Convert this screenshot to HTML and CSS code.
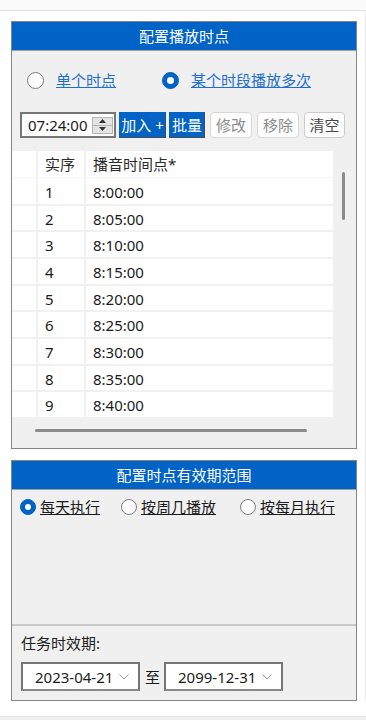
FILE: index.html
```html
<!DOCTYPE html>
<html>
	<head>
		<meta charset="utf-8">
		<title>配置播放时点</title>
		<meta name="viewport" content="width=device-width, user-scalable=no">
		<link rel="stylesheet" href="styles.css">
	</head>
	<body>
		<div class="top_strip"></div>
		<div class="page">

			<div class="cfg_box">
				<div class="box_title">配置播放时点</div>
				<div class="mode_row">
					<span class="opt"><span class="radio"></span><a class="link_blue">单个时点</a></span>
					<span class="opt opt_wide"><span class="radio on"></span><a class="link_blue">某个时段播放多次</a></span>
				</div>
				<div class="tool_row">
					<div class="time_box">
						<span class="time_val">07:24:00</span>
						<span class="spin">
							<span class="spin_half"><svg width="7" height="4" viewBox="0 0 7 4"><polygon points="0,4 3.5,0 7,4" fill="#333"/></svg></span>
							<span class="spin_half"><svg width="7" height="4" viewBox="0 0 7 4"><polygon points="0,0 3.5,4 7,0" fill="#333"/></svg></span>
						</span>
					</div>
					<button type="button" class="btn_blue w47">加入 +</button>
					<button type="button" class="btn_blue w36">批量</button>
					<button type="button" class="btn_light" disabled>修改</button>
					<button type="button" class="btn_light" disabled>移除</button>
					<button type="button" class="btn_light btn_on">清空</button>
				</div>
				<div class="list_area">
					<div class="grid_view">
						<div class="g_row g_head"><span></span><span>实序</span><span>播音时间点*</span></div>
						<div class="g_row"><span></span><span>1</span><span>8:00:00</span></div>
						<div class="g_row"><span></span><span>2</span><span>8:05:00</span></div>
						<div class="g_row"><span></span><span>3</span><span>8:10:00</span></div>
						<div class="g_row"><span></span><span>4</span><span>8:15:00</span></div>
						<div class="g_row"><span></span><span>5</span><span>8:20:00</span></div>
						<div class="g_row"><span></span><span>6</span><span>8:25:00</span></div>
						<div class="g_row"><span></span><span>7</span><span>8:30:00</span></div>
						<div class="g_row"><span></span><span>8</span><span>8:35:00</span></div>
						<div class="g_row"><span></span><span>9</span><span>8:40:00</span></div>
						<div class="g_row"><span></span><span></span><span></span></div>
					</div>
					<div class="v_track"><div class="v_thumb"></div></div>
					<div class="h_track"><div class="h_thumb"></div></div>
				</div>
			</div>

			<div class="cfg_box box_two">
				<div class="box_title">配置时点有效期范围</div>
				<div class="range_row">
					<span class="opt"><span class="radio small on"></span><a class="link_dark">每天执行</a></span>
					<span class="opt opt_r2"><span class="radio small"></span><a class="link_dark">按周几播放</a></span>
					<span class="opt opt_r3"><span class="radio small"></span><a class="link_dark">按每月执行</a></span>
				</div>
				<div class="range_blank"></div>
				<div class="valid_part">
					<div class="valid_label">任务时效期:</div>
					<div class="date_row">
						<div class="date_box">2023-04-21<svg class="chev" width="10" height="6" viewBox="0 0 10 6"><polyline points="0.5,0.5 5,5 9.5,0.5" fill="none" stroke="#9a9a9a" stroke-width="1"/></svg></div>
						<span class="to">至</span>
						<div class="date_box">2099-12-31<svg class="chev" width="10" height="6" viewBox="0 0 10 6"><polyline points="0.5,0.5 5,5 9.5,0.5" fill="none" stroke="#9a9a9a" stroke-width="1"/></svg></div>
					</div>
				</div>
			</div>

		</div>
		<div class="bottom_strip"></div>
	</body>
</html>
```

FILE: styles.css
```css
body {
	margin: 0;
	background: #fff;
	font-family: "Noto Sans", "Noto Sans CJK SC", sans-serif;
	font-size: 15px;
	color: #1b1b1b;
}
.top_strip {
	height: 10px;
	background: #fafafa;
	border-bottom: 1px solid #e2e2e2;
}
.page {
	padding: 10px 8px 0 11px;
	border-right: 1px solid #ededed;
}
.cfg_box {
	border: 1px solid #848484;
	background: #f0f0f0;
}
.box_two {
	margin-top: 11px;
}
.box_title {
	height: 28px;
	line-height: 28px;
	background: #0063c5;
	color: #fff;
	text-align: center;
	border-bottom: 1px solid #a0a0a0;
}

/* radio options */
.mode_row {
	height: 58px;
	display: flex;
	align-items: center;
	padding-left: 15px;
}
.opt {
	display: flex;
	align-items: center;
	line-height: 20px;
}
.opt_wide {
	margin-left: 46px;
}
.radio {
	width: 17px;
	height: 17px;
	box-sizing: border-box;
	border: 1px solid #7d7d7d;
	border-radius: 50%;
	background: #fbfbfb;
	margin-right: 12px;
	display: flex;
	align-items: center;
	justify-content: center;
}
.radio.on {
	background: #0063c5;
	border-color: #0063c5;
}
.radio.on::after {
	content: "";
	width: 7px;
	height: 7px;
	border-radius: 50%;
	background: #fff;
}
.radio.small {
	width: 16px;
	height: 16px;
	margin-right: 4px;
}
.radio.small.on::after {
	width: 6px;
	height: 6px;
}
.link_blue {
	color: #1f6fd3;
	text-decoration: underline;
}
.link_dark {
	color: #1b1b1b;
	text-decoration: underline;
}

/* toolbar */
.tool_row {
	display: flex;
	align-items: center;
	gap: 3px;
	height: 26px;
	margin: 3px 0 0 8px;
}
.time_box {
	width: 96px;
	height: 26px;
	box-sizing: border-box;
	border: 2px solid #767676;
	background: #fff;
	display: flex;
	align-items: center;
	padding-left: 6px;
}
.time_val {
	flex: 1;
	line-height: 20px;
}
.spin {
	width: 21px;
	height: 17px;
	box-sizing: border-box;
	border: 1px solid #b4b4b4;
	background: #e4e4e4;
	display: flex;
	flex-direction: column;
	margin-right: 1px;
}
.spin_half {
	flex: 1;
	display: flex;
	align-items: center;
	justify-content: center;
}
.spin_half + .spin_half {
	border-top: 1px solid #b4b4b4;
}
button {
	font: inherit;
	height: 26px;
	padding: 0;
	line-height: 22px;
	box-sizing: border-box;
	white-space: nowrap;
}
.btn_blue {
	background: #0063c5;
	color: #fff;
	border: 1px solid #0063c5;
	border-right-color: #4a4a4a;
	border-bottom-color: #4a4a4a;
}
.w47 {
	width: 47px;
}
.w36 {
	width: 36px;
}
.btn_light {
	width: 42px;
	margin-left: 2px;
	background: #fdfdfd;
	color: #8c8c8c;
	border: 1px solid #d8d8d8;
	border-radius: 4px;
}
.btn_on {
	width: 41px;
	color: #4a4a4a;
	border-color: #cbcbcb;
}

/* list of time points */
.list_area {
	margin-top: 13px;
	display: grid;
	grid-template-columns: 321px 1fr;
	grid-template-rows: 268px 29px;
}
.grid_view {
	background: #fff;
	overflow: hidden;
}
.g_row {
	display: grid;
	grid-template-columns: 26px 48px 1fr;
	height: 26.67px;
	box-sizing: border-box;
	border-bottom: 2px solid #f1f1f1;
}
.g_head {
	height: 28px;
	color: #2a2a2a;
	border-bottom-color: #f8f8f8;
}
.g_row span {
	padding-left: 7px;
	line-height: 27px;
	border-right: 2px solid #f1f1f1;
}
.g_row span:last-child {
	border-right: none;
}
.v_thumb {
	width: 3px;
	height: 48px;
	margin: 21px 0 0 9px;
	background: #8b8b8b;
	border-radius: 2px;
}
.h_track {
	grid-column: 1 / span 2;
}
.h_thumb {
	width: 272px;
	height: 3px;
	margin: 10px 0 0 23px;
	background: #8b8b8b;
	border-radius: 2px;
}

/* validity range */
.range_row {
	height: 34px;
	display: flex;
	align-items: center;
	padding-left: 8px;
}
.opt_r2 {
	margin-left: 21px;
}
.opt_r3 {
	margin-left: 24px;
}
.range_blank {
	height: 100px;
}
.valid_part {
	border-top: 2px solid #c9c9c9;
	padding: 7px 0 9px 9px;
}
.valid_label {
	line-height: 20px;
	color: #222;
}
.date_row {
	display: flex;
	align-items: center;
	margin-top: 9px;
}
.date_box {
	width: 119px;
	height: 29px;
	box-sizing: border-box;
	border: 2px solid #767676;
	border-bottom-color: #8a8a8a;
	background: #fff;
	display: flex;
	align-items: center;
	padding-left: 12px;
	line-height: 20px;
}
.chev {
	margin-left: 6px;
}
.to {
	margin: 0 4px 0 5px;
	line-height: 20px;
}
.bottom_strip {
	margin-top: 15px;
	height: 10px;
	background: #f0f0f0;
	border-top: 1px solid #e6e6e6;
}
```
